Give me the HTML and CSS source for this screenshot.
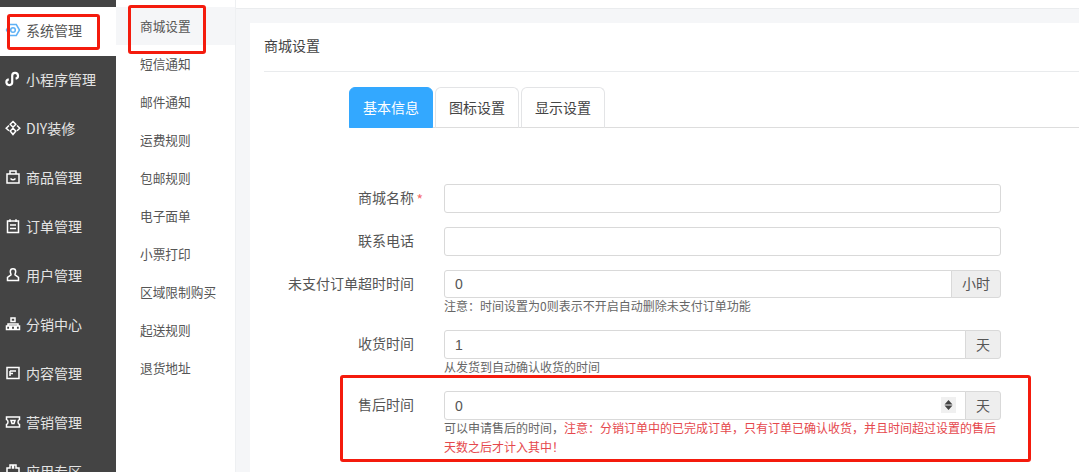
FILE: index.html
```html
<!DOCTYPE html>
<html lang="zh-CN">
<head>
<meta charset="utf-8">
<title>商城设置</title>
<link rel="stylesheet" href="styles.css">
</head>
<body>
<div class="app">
  <nav class="side">
    <a class="side-item active"><svg class="ico" viewBox="0 0 16 16"><path d="M1.500 8l3.200-5.500h6.600L14.500 8l-3.200 5.500H4.700z"/><circle cx="8" cy="8" r="2.300"/></svg>系统管理</a>
    <a class="side-item"><svg class="ico ico-bold" viewBox="0 0 16 16"><path d="M3.800 8.300A2.900 2.900 0 1 0 7.200 11.200V4.800A2.900 2.900 0 1 1 10.600 7.700"/></svg>小程序管理</a>
    <a class="side-item"><svg class="ico" viewBox="0 0 16 16"><path d="M8 1.500l2.800 2.800L8 7.200 5.200 4.300zM8 8.200l2.800 2.800L8 14.500 5.200 11zM4 5.500L1.200 8.200 4 10.800M12 5.500l2.800 2.700L12 10.800"/></svg>DIY装修</a>
    <a class="side-item"><svg class="ico" viewBox="0 0 16 16"><path d="M2 5h12v9H2zM5 5V2h6v3M5.500 9.500q2.500 2.500 5 0"/></svg>商品管理</a>
    <a class="side-item"><svg class="ico" viewBox="0 0 16 16"><path d="M2.500 3h11v11.500h-11zM5 1.200V4M11 1.200V4M5 7h6M5 10.500h6"/></svg>订单管理</a>
    <a class="side-item"><svg class="ico" viewBox="0 0 16 16"><path d="M5.300 4.500a2.700 2.700 0 0 1 5.400 0c0 1.500-.7 2-.7 3.300l3.500 2.500v3.200H2.500v-3.200L6 7.800c0-1.300-.7-1.800-.7-3.300z"/></svg>用户管理</a>
    <a class="side-item"><svg class="ico" viewBox="0 0 16 16"><path d="M6 2h4v3.500H6zM1.500 10h3.300v3.500H1.500zM6.300 10h3.400v3.500H6.300zM11.200 10h3.300v3.500h-3.300zM3 10V8h10v2"/></svg>分销中心</a>
    <a class="side-item"><svg class="ico" viewBox="0 0 16 16"><path d="M2 2.500h12v11H2zM5 6h6M5 6v5M5 8.500h3"/></svg>内容管理</a>
    <a class="side-item"><svg class="ico" viewBox="0 0 16 16"><path d="M1.500 3h13v2.500c-2 .7-2 4.300 0 5V13h-13v-2.500c2-.7 2-4.300 0-5zM6 6.500h4l-1 3H7z"/></svg>营销管理</a>
    <a class="side-item"><svg class="ico" viewBox="0 0 16 16"><path d="M2 14V5h3V2h2.500v3h1V2H11v3h3v9z"/></svg>应用专区</a>
  </nav>
  <aside class="sub">
    <a class="sub-item active">商城设置</a>
    <a class="sub-item">短信通知</a>
    <a class="sub-item">邮件通知</a>
    <a class="sub-item">运费规则</a>
    <a class="sub-item">包邮规则</a>
    <a class="sub-item">电子面单</a>
    <a class="sub-item">小票打印</a>
    <a class="sub-item">区域限制购买</a>
    <a class="sub-item">起送规则</a>
    <a class="sub-item">退货地址</a>
  </aside>
  <main class="main">
    <section class="card">
      <h1 class="card-title">商城设置</h1>
      <div class="tabs">
        <a class="tab active">基本信息</a>
        <a class="tab">图标设置</a>
        <a class="tab">显示设置</a>
      </div>
      <form class="form">
        <div class="row">
          <label class="label">商城名称<span class="req">*</span></label>
          <div class="control"><div class="group"><input class="input" type="text"></div></div>
        </div>
        <div class="row">
          <label class="label">联系电话</label>
          <div class="control"><div class="group"><input class="input" type="text"></div></div>
        </div>
        <div class="row row-short">
          <label class="label">未支付订单超时时间</label>
          <div class="control">
            <div class="group"><input class="input" type="text" value="0"><span class="addon addon-wide">小时</span></div>
            <p class="help">注意：时间设置为0则表示不开启自动删除未支付订单功能</p>
          </div>
        </div>
        <div class="row">
          <label class="label">收货时间</label>
          <div class="control">
            <div class="group"><input class="input" type="text" value="1"><span class="addon">天</span></div>
            <p class="help">从发货到自动确认收货的时间</p>
          </div>
        </div>
        <div class="row">
          <label class="label">售后时间</label>
          <div class="control">
            <div class="group">
              <input class="input" type="text" value="0">
              <span class="spin"><svg viewBox="0 0 15 16" width="15" height="16"><path d="M7.500 3l4 4.500h-8zM7.500 13l4-4.500h-8z"/></svg></span>
              <span class="addon">天</span>
            </div>
            <p class="help help-note">可以申请售后的时间，<span class="danger">注意：分销订单中的已完成订单，只有订单已确认收货，并且时间超过设置的售后天数之后才计入其中！</span></p>
          </div>
        </div>
      </form>
    </section>
  </main>
</div>
<div class="mark mark-side"></div>
<div class="mark mark-sub"></div>
<div class="mark mark-form"></div>
</body>
</html>
```
FILE: styles.css
```css
* { box-sizing: border-box; }
html, body { margin: 0; height: 472px; overflow: hidden; background: #f5f6f8; }
body { font-family: "Noto Sans CJK SC", "Liberation Sans", sans-serif; font-size: 14px; color: #444; position: relative; }

.app { display: flex; height: 472px; overflow: hidden; }

/* primary sidebar */
.side { width: 116px; flex: none; background: #444; padding-top: 7px; overflow: hidden; }
.side-item { display: flex; align-items: center; height: 49px; padding: 0 0 3px 5px; gap: 5px; color: #e4e4e4; white-space: nowrap; font-size: 14px; }
.side-item.active { background: #fff; color: #555; }
.ico { width: 16px; height: 16px; flex: none; fill: none; stroke: #fff; stroke-width: 1.500; }
.ico-bold { stroke-width: 2.200; }
.side-item.active .ico { stroke: #5eb1f5; }

/* secondary menu */
.sub { width: 120px; flex: none; background: #fff; padding-top: 7px; border-right: 1px solid #eef0f2; }
.sub-item { display: flex; align-items: center; height: 38px; padding: 0 0 2px 24px; font-size: 12.700px; color: #555; white-space: nowrap; }
.sub-item.active { background: #f5f6f8; }

/* content */
.main { flex: 1; min-width: 0; padding-top: 22px; padding-left: 14px; background: #f5f6f8; }
.main::before { content: ""; display: block; height: 8px; margin: -22px 0 14px -14px; background: #fff; border-bottom: 1px solid #eaecee; }
.card { background: #fff; height: 460px; padding-left: 14px; }
.card-title { margin: 0; height: 49px; padding-bottom: 4px; display: flex; align-items: center; font-size: 14px; font-weight: 400; color: #444; border-bottom: 1px solid #e9ebed; }

.tabs { display: flex; gap: 2px; margin: 15px 0 0 85px; height: 41px; border-bottom: 1px solid #ddd; }
.tab { width: 84px; height: 41px; padding-bottom: 2px; display: flex; align-items: center; justify-content: center; font-size: 14px; color: #444; background: #fff; border: 1px solid #e3e4e6; border-bottom: 1px solid #ddd; border-radius: 6px 6px 0 0; }
.tab.active { background: #33a8ff; border-color: #33a8ff; color: #fff; }

/* form */
.form { margin-top: 56px; }
.row { display: flex; margin-bottom: 14px; }
.label { width: 150px; height: 29px; padding-bottom: 3px; flex: none; display: flex; align-items: center; justify-content: flex-end; font-size: 14px; color: #555; position: relative; white-space: nowrap; }
.req { position: absolute; right: -9px; top: 5px; color: #f56c6c; font-size: 14px; }
.control { margin-left: 30px; width: 557px; }
.group { display: flex; height: 29px; position: relative; }
.row-short .group, .row-short .label { height: 28px; }
.input { flex: 1; min-width: 0; height: 100%; border: 1px solid #d9d9d9; border-radius: 3px; padding: 0 10px; font-family: "Liberation Sans", sans-serif; font-size: 14px; color: #555; background: #fff; outline: none; }
.group .input:not(:last-child) { border-radius: 3px 0 0 3px; }
.addon { width: 36px; padding-bottom: 2px; flex: none; display: flex; align-items: center; justify-content: center; background: #eee; border: 1px solid #d9d9d9; border-radius: 0 3px 3px 0; margin-left: -1px; font-size: 14px; color: #555; }
.addon-wide { width: 50px; }
.spin { position: absolute; right: 45px; top: 6px; width: 15px; height: 16px; background: #f0f0f0; display: flex; }
.spin path { fill: #444; }
.help { margin: -1px 0 1px; font-size: 12px; line-height: 18px; color: #666; }
.help-note { margin: -2px 0 0; line-height: 19px; }
.danger { color: #e5484d; }

/* red annotation boxes drawn over the screenshot */
.mark { position: absolute; border: 3px solid #f41b0d; border-radius: 3px; pointer-events: none; }
.mark-side { left: 7px; top: 14px; width: 93px; height: 36px; }
.mark-sub { left: 128px; top: 5px; width: 78px; height: 49px; }
.mark-form { left: 340px; top: 375px; width: 691px; height: 87px; }
```
